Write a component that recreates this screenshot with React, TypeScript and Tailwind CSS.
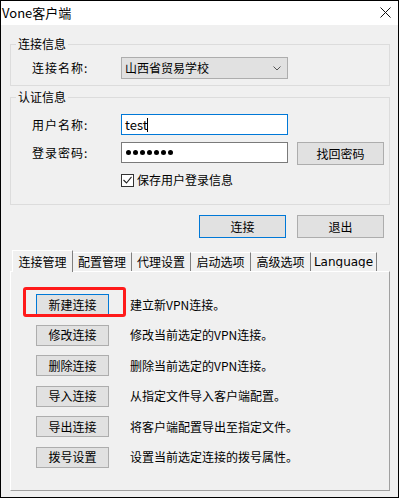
const font = { fontFamily: '"Noto Sans CJK SC", "Noto Sans", sans-serif' }

function Btn({ label, focus, className = '' }: { label: string; focus?: boolean; className?: string }) {
  return (
    <div
      className={`flex items-center justify-center bg-[#e1e1e1] border text-[12px] leading-[14px] text-black ${
        focus ? 'border-[#0078d7]' : 'border-[#adadad]'
      } ${className}`}
    >
      {label}
    </div>
  )
}

const actions = [
  { label: '新建连接', desc: '建立新VPN连接。' },
  { label: '修改连接', desc: '修改当前选定的VPN连接。' },
  { label: '删除连接', desc: '删除当前选定的VPN连接。' },
  { label: '导入连接', desc: '从指定文件导入客户端配置。' },
  { label: '导出连接', desc: '将客户端配置导出至指定文件。' },
  { label: '拨号设置', desc: '设置当前选定连接的拨号属性。' },
]

const tabs = [
  { label: '配置管理', w: 'w-[59px]' },
  { label: '代理设置', w: 'w-[59px]' },
  { label: '启动选项', w: 'w-[60px]' },
  { label: '高级选项', w: 'w-[60px]' },
]

export default function App() {
  return (
    <div style={font} className="w-[399px] h-[498px] border border-black bg-[#f0f0f0] flex flex-col text-black overflow-hidden">
      {/* Title bar */}
      <div className="h-[24px] bg-white flex items-center justify-between pl-[1px] pr-[7px] shrink-0">
        <span className="text-[13px] leading-[16px]">Vone客户端</span>
        <svg width="11" height="11" viewBox="0 0 11 11" className="mt-[-1px]">
          <path d="M0.5 0.5 L10.5 10.5 M10.5 0.5 L0.5 10.5" stroke="#111" strokeWidth="1" fill="none" />
        </svg>
      </div>

      <div className="flex flex-col pl-[9px] pr-[8px]">
        {/* 连接信息 */}
        <fieldset className="mt-[11px] border border-[#dcdcdc] w-[380px]">
          <legend className="ml-[5px] px-[2px] text-[12px] leading-[16px]">连接信息</legend>
          <div className="flex items-center pl-[21px] pt-[5px] pb-[6px]">
            <span className="w-[89px] text-[12px] leading-[16px] tracking-[1px]">连接名称:</span>
            <div className="w-[167px] h-[22px] bg-[#e1e1e1] border border-[#adadad] flex items-center justify-between pl-[3px] pr-[6px]">
              <span className="text-[12px] leading-[16px]">山西省贸易学校</span>
              <svg width="8" height="5" viewBox="0 0 8 5">
                <path d="M0.5 0.5 L4 4 L7.5 0.5" stroke="#555" strokeWidth="1" fill="none" />
              </svg>
            </div>
          </div>
        </fieldset>

        {/* 认证信息 */}
        <fieldset className="mt-[3px] border border-[#dcdcdc] w-[380px]">
          <legend className="ml-[5px] px-[2px] text-[12px] leading-[16px]">认证信息</legend>
          <div className="flex flex-col pl-[21px] pt-[9px] pb-[16px]">
            <div className="flex items-center">
              <span className="w-[89px] text-[12px] leading-[16px] tracking-[1px]">用户名称:</span>
              <div className="w-[167px] h-[21px] bg-white border border-[#0078d7] flex items-center pl-[3px]">
                <span className="text-[13px] leading-[16px]">test</span>
                <span className="w-px h-[14px] bg-black -ml-[1px]" />
              </div>
            </div>
            <div className="flex items-start mt-[7px]">
              <span className="w-[89px] h-[21px] flex items-center text-[12px] leading-[16px] tracking-[1px]">登录密码:</span>
              <div className="w-[167px] h-[21px] bg-white border border-[#7a7a7a] flex items-center pl-[4px] gap-[2px]">
                {Array.from({ length: 7 }).map((_, i) => (
                  <span key={i} className="w-[5px] h-[5px] rounded-full bg-black" />
                ))}
              </div>
              <Btn label="找回密码" className="ml-[9px] w-[87px] h-[23px]" />
            </div>
            <div className="flex items-center ml-[89px] mt-[7px]">
              <div className="w-[13px] h-[13px] border border-[#333] bg-white flex items-center justify-center">
                <svg width="9" height="8" viewBox="0 0 9 8">
                  <path d="M0.5 4 L3.5 7 L8.5 0.8" stroke="#222" strokeWidth="1.1" fill="none" />
                </svg>
              </div>
              <span className="ml-[3px] text-[12px] leading-[16px]">保存用户登录信息</span>
            </div>
          </div>
        </fieldset>

        {/* 连接 / 退出 */}
        <div className="flex justify-end gap-[11px] mt-[10px] pr-[6px] w-[380px]">
          <Btn label="连接" focus className="w-[87px] h-[23px]" />
          <Btn label="退出" className="w-[87px] h-[23px]" />
        </div>

        {/* Tabs */}
        <div className="flex items-end mt-[12px] ml-[2px] h-[21px] relative z-10">
          <div className="w-[61px] h-[22px] -mb-px bg-[#f0f0f0] border-l border-t border-l-white border-t-white border-r border-r-[#808080] flex items-center justify-center text-[12px] leading-[16px]">
            连接管理
          </div>
          {tabs.map((t) => (
            <div
              key={t.label}
              className={`${t.w} h-[19px] border-t border-t-white border-r border-r-[#808080] flex items-center justify-center text-[12px] leading-[16px]`}
            >
              {t.label}
            </div>
          ))}
          <div className="w-[66px] h-[19px] border-t border-t-white border-r border-r-[#808080] flex items-start justify-center">
            {/* descenders are cut off by the tab, as in the original */}
            <span
              className="leading-[13px] h-[12px] mt-[3px] overflow-hidden"
              style={{ fontFamily: '"DejaVu Sans", sans-serif', fontSize: '12px' }}
            >
              Language
            </span>
          </div>
        </div>

        {/* Tab panel */}
        <div className="relative w-[380px] h-[220px] border border-white border-r-[#a0a0a0] border-b-[#a0a0a0] pt-[22px] pl-[25px] flex flex-col gap-[9.5px]">
          {actions.map((a, i) => (
            <div key={a.label} className="flex items-center">
              <Btn label={a.label} focus={i === 0} className="w-[73px] h-[21px]" />
              <span className="ml-[21px] text-[12px] leading-[16px]">{a.desc}</span>
            </div>
          ))}
          <div className="absolute left-[12px] top-[15px] w-[103px] h-[30px] border-[3px] border-[#ff1a1a] rounded-[3px]" />
        </div>
      </div>
    </div>
  )
}
